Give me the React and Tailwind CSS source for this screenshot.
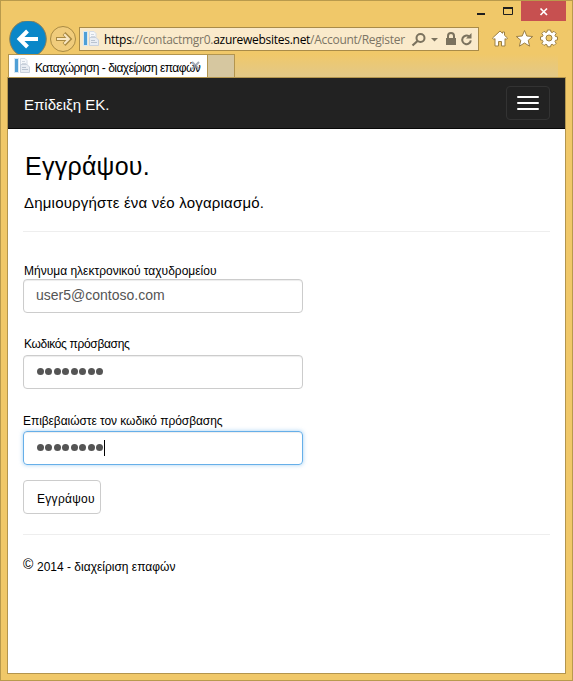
function PageIcon() {
  return (
    <svg width="16" height="16" viewBox="0 0 16 16" className="shrink-0">
      <rect x="0" y="0" width="5" height="15" fill="#d8e8f4" />
      <rect x="1" y="1" width="3" height="13" fill="#4f9fd6" />
      <path d="M6.500 .5h4.500l2 2v6.500h-6.500z" fill="#f6f8fb" stroke="#d5dce6" />
      <path d="M6.500 6.500h6.500l2.500 2.500v5.500h-9z" fill="#e9edf3" stroke="#c9d1dc" />
      <path d="M8 3.500h3M8 5.500h4" stroke="#d0d7e0" />
      <path d="M8 9.500h4M8 11.500h6" stroke="#b9c3d0" />
    </svg>
  );
}

function Titlebar() {
  return (
    <div className="flex h-5 justify-end">
      <svg width="92" height="20" viewBox="0 0 92 20">
        <rect x="1" y="12" width="8" height="2" fill="#1e1e1e" />
        <path d="M27.500 6.500h9v7h-9z" fill="none" stroke="#1e1e1e" />
        <rect x="27" y="6" width="10" height="2" fill="#1e1e1e" />
        <rect x="45" width="45" height="20" fill="#c75050" />
        <path d="M64.500 7.500l6.500 6.500M71 7.500l-6.500 6.500" stroke="#fff" strokeWidth="1.700" />
      </svg>
      <div className="w-[4px]" />
    </div>
  );
}

function Toolbar() {
  return (
    <div className="flex h-[33px]">
      <svg width="78" height="38" viewBox="1 21 78 38" className="shrink-0">
        <circle cx="28" cy="39" r="18.300" fill="#0a87c8" stroke="#8d8057" />
        <path d="M38 39H21M27.500 31L19.500 39l8 8" fill="none" stroke="#fff" strokeWidth="4" />
        <circle cx="63" cy="39" r="12.500" fill="#f0cc7c" stroke="#a98a43" />
        <path d="M56 39h12M64 33.500l5.500 5.500-5.500 5.500" fill="none" stroke="#a98a43" strokeWidth="4" />
        <path d="M57 39h11M64.200 34.300l4.700 4.700-4.700 4.700" fill="none" stroke="#f9e7c3" strokeWidth="2" />
      </svg>
      <div className="mt-[6px] flex h-6 w-[400px] shrink-0 items-center border border-[#a98b48] bg-[#faeacb] pl-[3px]">
        <PageIcon />
        <div className="ml-[5px] w-[301px] whitespace-nowrap pt-[2px] font-['Open_Sans','Noto_Sans',sans-serif] text-[12px] leading-5 tracking-[-0.28px] text-[#7c7565]">
          <span className="text-black">https</span>://contactmgr0.<span className="text-black">azurewebsites.net</span>/Account/Register
        </div>
        <svg width="66" height="22" viewBox="407 28 66 22" className="ml-[2px] shrink-0">
          <circle cx="420.500" cy="38" r="4" fill="none" stroke="#7b725e" strokeWidth="2" />
          <path d="M417.500 41l-5 4.500" stroke="#7b725e" strokeWidth="2.300" />
          <path d="M431 38h7l-3.500 3.500z" fill="#7b725e" />
          <path d="M448 38v-2a3 3 0 0 1 6 0v2" fill="none" stroke="#7b725e" strokeWidth="2" />
          <rect x="446" y="38" width="10" height="7" fill="#7b725e" />
          <path d="M469 36.300a4.300 4.300 0 1 0 1.800 4" fill="none" stroke="#7b725e" strokeWidth="2" />
          <path d="M471.500 33v5.500H466z" fill="#7b725e" />
        </svg>
      </div>
      <svg width="80" height="33" viewBox="479 21 80 33" className="shrink-0">
        <g fill="#fff" stroke="#9c8044" strokeLinejoin="round">
          <path d="M500 31l2.500 2.300V32h2v3.300l3 2.700-1.300 1.600-1.200-1V46h-3.500v-4.500h-3V46H495v-7.400l-1.200 1-1.300-1.600z" />
          <path d="M524.500 30.500l2.300 5.500 5.900.5-4.500 3.800 1.400 5.900-5.100-3.200-5.100 3.200 1.400-5.900-4.500-3.800 5.900-.5z" />
          <path fillRule="evenodd" transform="translate(0 -1)" d="M547.400 31h3.200l.4 2 1.200.5 1.800-1.200 2.200 2.200-1.200 1.800.5 1.200 2 .4v3l-2 .4-.5 1.200 1.200 1.800-2.200 2.200-1.800-1.200-1.200.5-.4 2h-3.200l-.4-2-1.200-.5-1.800 1.200-2.200-2.200 1.200-1.800-.5-1.200-2-.4v-3l2-.4.5-1.200-1.200-1.800 2.200-2.200 1.800 1.200 1.200-.5zM549 36a3 3 0 1 0 0 6 3 3 0 0 0 0-6z" />
        </g>
      </svg>
    </div>
  );
}

function Tabs() {
  return (
    <div className="relative ml-[7px] flex h-[23px]">
      <div className="flex w-[200px] items-center border border-b-0 border-[#b3954e] bg-white pl-[5px]">
        <PageIcon />
        <div className="ml-[5px] w-[168px] whitespace-nowrap pt-1 text-[12px] leading-[18px] tracking-[-0.52px] text-black">
          Καταχώρηση - διαχείριση επαφών
        </div>
        <svg width="10" height="10" viewBox="0 0 10 10" className="-ml-[12px] shrink-0">
          <path d="M1 1l7 7M8 1L1 8" stroke="#8f98a8" strokeWidth="2" opacity=".8" />
        </svg>
      </div>
      <div className="w-[27px] border border-b-0 border-l-0 border-[#b3954e] bg-[#d6c7a0]" />
      <div className="mr-[14px] flex-1 bg-linear-to-b from-[#f0c869] to-[#e2c887]" />
    </div>
  );
}

function Navbar() {
  return (
    <div className="flex h-[51px] items-center justify-between border-b border-[#080808] bg-[#222] pr-[15px] pl-4">
      <div className="mt-1 whitespace-nowrap text-[15px] leading-5 text-white">Επίδειξη ΕΚ.</div>
      <div className="flex h-[34px] w-11 flex-col items-center justify-center gap-1 rounded-[4px] border border-[#333]">
        <div className="h-[2px] w-[22px] rounded-[1px] bg-white" />
        <div className="h-[2px] w-[22px] rounded-[1px] bg-white" />
        <div className="h-[2px] w-[22px] rounded-[1px] bg-white" />
      </div>
    </div>
  );
}

function Dots() {
  return (
    <div className="mb-px flex gap-[1.5px] pl-[0.5px]">
      {Array.from({ length: 8 }, (_, i) => (
        <div key={i} className="size-[7px] rounded-full bg-[#555]" />
      ))}
    </div>
  );
}

const field =
  "flex h-[34px] w-[280px] items-center rounded-[4px] border px-3 text-[14px] text-[#555]";
const idle = "border-[#ccc] shadow-[inset_0_1px_1px_rgba(0,0,0,0.075)]";
const focused = "border-[#66afe9] shadow-[inset_0_1px_1px_rgba(0,0,0,0.075),0_0_4px_rgba(102,175,233,0.6)]";

export default function App() {
  return (
    <div className="h-[681px] w-[573px] overflow-hidden border border-[#b99a4c] bg-[#f0c869] font-['Liberation_Sans',Arial,sans-serif]">
      <Titlebar />
      <Toolbar />
      <Tabs />
      <div className="ml-[6px] h-[597px] w-[559px] border border-[#b3954e] bg-white">
        <Navbar />
        <div className="flex flex-col pr-[15px] pl-[15px] text-black">
          <h1 className="mt-5 h-[34px] pl-[2px] text-[25px] leading-[34px] tracking-[0.25px] whitespace-nowrap">Εγγράψου.</h1>
          <p className="mt-[10px] h-5 pl-px text-[15px] leading-5 tracking-[0.2px] whitespace-nowrap">Δημιουργήστε ένα νέο λογαριασμό.</p>
          <div className="mt-[18px] h-px bg-[#eee]" />

          <div className="mt-[31px] h-4 pl-px text-[12px] leading-4 whitespace-nowrap">Μήνυμα ηλεκτρονικού ταχυδρομείου</div>
          <div className={`${field} ${idle}`}>
            <span className="mb-[2px]">user5@contoso.com</span>
          </div>

          <div className="mt-[23px] h-4 pl-px text-[12px] leading-4 tracking-[-0.33px] whitespace-nowrap">Κωδικός πρόσβασης</div>
          <div className={`mt-[3px] ${field} ${idle}`}>
            <Dots />
          </div>

          <div className="mt-6 h-4 text-[12px] leading-4 tracking-[-0.07px] whitespace-nowrap">Επιβεβαιώστε τον κωδικό πρόσβασης</div>
          <div className={`mt-[2px] ${field} ${focused}`}>
            <Dots />
            <div className="ml-px h-4 w-px bg-black" />
          </div>

          <div className="mt-[15px] h-[34px] w-[78px] rounded-[4px] border border-[#ccc] pt-[10px] pl-[13px] text-[12px] leading-4 tracking-[0.3px] whitespace-nowrap">
            Εγγράψου
          </div>
          <div className="mt-5 h-px bg-[#eee]" />
          <div className="mt-6 flex h-4 text-[12px] leading-4 whitespace-nowrap">
            <span className="-mt-[3px] w-[14px] text-[14px]">©</span>
            <span>2014 - διαχείριση επαφών</span>
          </div>
        </div>
      </div>
    </div>
  );
}
